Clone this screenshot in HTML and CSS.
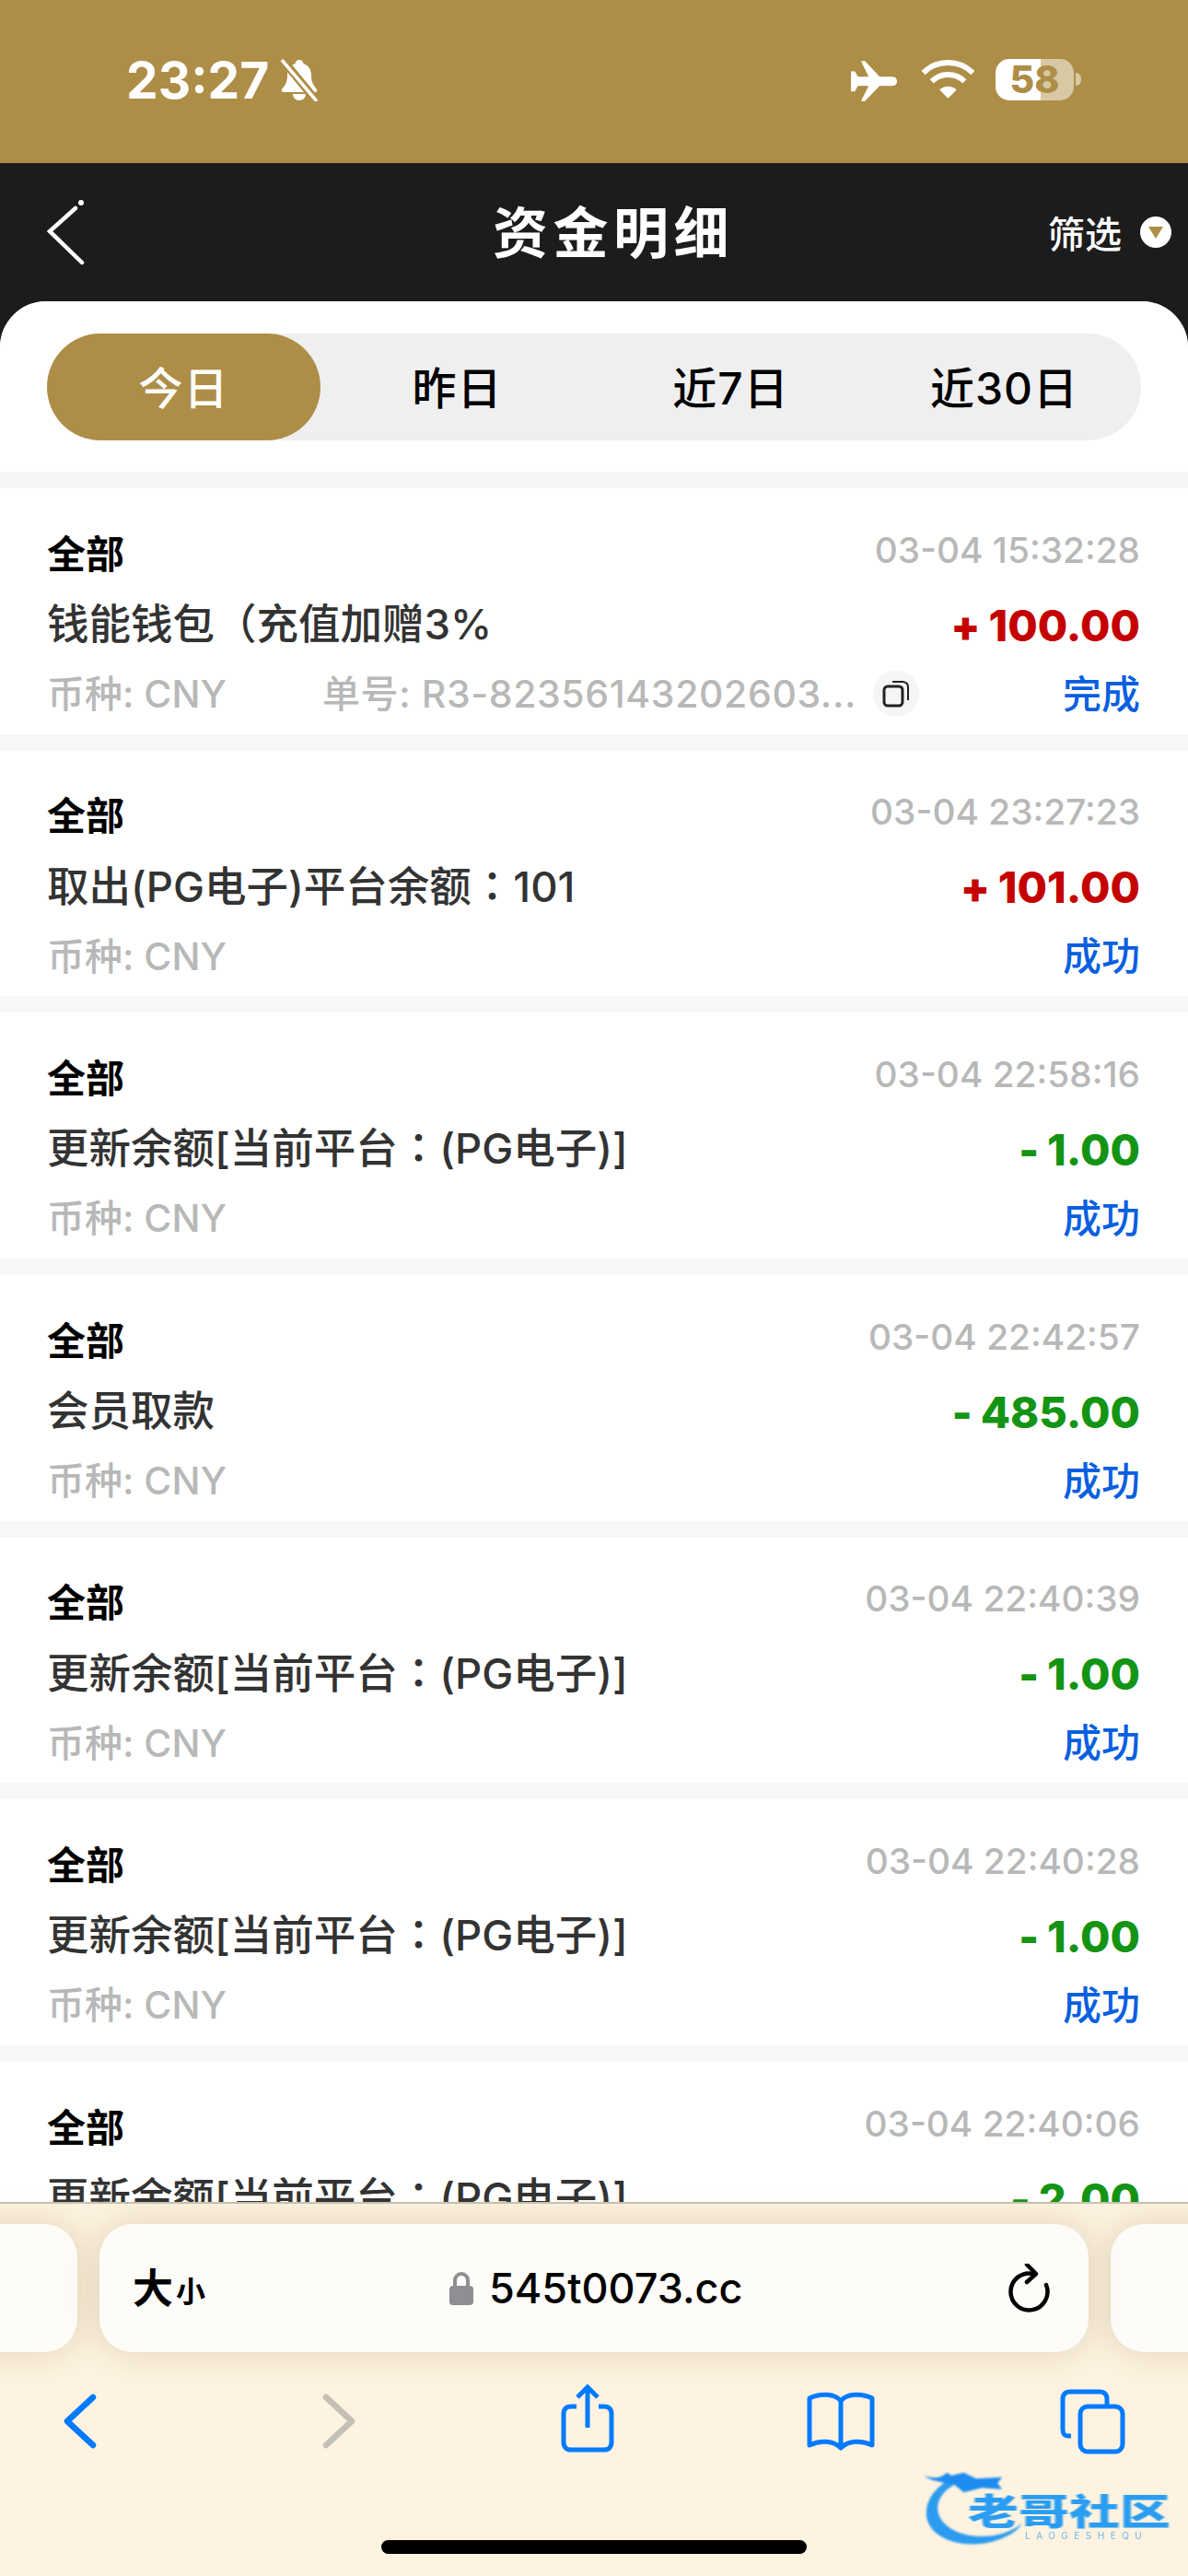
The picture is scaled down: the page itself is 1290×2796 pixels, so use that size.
FILE: index.html
```html
<!DOCTYPE html>
<html lang="zh-CN">
<head>
    <meta charset="UTF-8">
    <meta name="viewport" content="width=device-width, initial-scale=1.0">
    <title>资金明细</title>
    <link rel="stylesheet" href="styles.css">
</head>
<body>
    <div class="phone">
        <!-- Status bar -->
        <div class="status-bar">
            <div class="status-left">
                <span class="clock">23:27</span>
                <svg class="bell" viewBox="0 0 46 46">
                    <path d="M23 1c3 0 4 2 4.500 4 6 2 8.500 7 8.500 13 0 7 2 10 6 15 1 2 0 3-2 3H6c-2 0-3-1-2-3 4-5 6-8 6-15 0-6 2.500-11 8.500-13 .5-2 1.500-4 4.500-4z" fill="#fff"/>
                    <path d="M16 38h14c0 4-3 7-7 7s-7-3-7-7z" fill="#fff"/>
                    <path d="M4 0l38 46" stroke="#ae8d47" stroke-width="9"/>
                    <path d="M4 1l38 45" stroke="#fff" stroke-width="3.500"/>
                </svg>
            </div>
            <div class="status-right">
                <svg class="plane" viewBox="132 78 151 132">
                    <path d="M165 78H178L226 130H268Q283 132 283 145Q283 158 268 160H226L178 210H165L190 160H155L145 178H132V112H145L155 130H190Z" fill="#fff"/>
                </svg>
                <svg class="wifi" viewBox="362 75 172 128">
                    <path d="M366 118A116 116 0 0 1 530 118" fill="none" stroke="#fff" stroke-width="18"/>
                    <path d="M394 146A77 77 0 0 1 502 146" fill="none" stroke="#fff" stroke-width="18"/>
                    <path d="M448 202L420 174A40 40 0 0 1 476 174Z" fill="#fff"/>
                </svg>
                <div class="battery"><span>58</span></div>
                <div class="battery-nub"></div>
            </div>
        </div>

        <!-- Nav -->
        <div class="nav">
            <svg class="nav-back" viewBox="0 0 42 72">
                <path d="M31 10L3 35L38 69" fill="none" stroke="#fff" stroke-width="4.500" stroke-linecap="round"/>
                <circle cx="37" cy="4" r="3" fill="#fff"/>
            </svg>
            <div class="nav-title">资金明细</div>
            <div class="nav-filter">
                <span>筛选</span>
                <span class="filter-dot"><i></i></span>
            </div>
        </div>

        <div class="panel">
            <div class="tabs-wrap">
                <div class="tabs">
                    <div class="tab active">今日</div>
                    <div class="tab">昨日</div>
                    <div class="tab">近7日</div>
                    <div class="tab">近30日</div>
                </div>
            </div>

            <div class="list">
                <div class="card">
                    <div class="row">
                        <span class="type">全部</span>
                        <span class="time">03-04 15:32:28</span>
                    </div>
                    <div class="row">
                        <span class="name">钱能钱包（充值加赠3%</span>
                        <span class="amount plus"><small>+</small>100.00</span>
                    </div>
                    <div class="row">
                        <span class="coin">币种: CNY</span>
                        <span class="order">单号: R3-82356143202603...</span>
                        <span class="copy">
                            <svg viewBox="0 0 30 30">
                                <rect x="2" y="7" width="20" height="21" rx="4" fill="none" stroke="#222" stroke-width="3"/>
                                <path d="M11 2h11c3 0 6 2 6 5v15" fill="none" stroke="#222" stroke-width="2"/>
                            </svg>
                        </span>
                        <span class="state">完成</span>
                    </div>
                </div>

                <div class="card">
                    <div class="row">
                        <span class="type">全部</span>
                        <span class="time">03-04 23:27:23</span>
                    </div>
                    <div class="row">
                        <span class="name">取出(PG电子)平台余额<span class="tc" lang="zh-TW">：</span>101</span>
                        <span class="amount plus"><small>+</small>101.00</span>
                    </div>
                    <div class="row">
                        <span class="coin">币种: CNY</span>
                        <span class="state">成功</span>
                    </div>
                </div>

                <div class="card">
                    <div class="row">
                        <span class="type">全部</span>
                        <span class="time">03-04 22:58:16</span>
                    </div>
                    <div class="row">
                        <span class="name">更新余额[当前平台<span class="tc" lang="zh-TW">：</span>(PG电子)]</span>
                        <span class="amount minus"><small>-</small>1.00</span>
                    </div>
                    <div class="row">
                        <span class="coin">币种: CNY</span>
                        <span class="state">成功</span>
                    </div>
                </div>

                <div class="card">
                    <div class="row">
                        <span class="type">全部</span>
                        <span class="time">03-04 22:42:57</span>
                    </div>
                    <div class="row">
                        <span class="name">会员取款</span>
                        <span class="amount minus"><small>-</small>485.00</span>
                    </div>
                    <div class="row">
                        <span class="coin">币种: CNY</span>
                        <span class="state">成功</span>
                    </div>
                </div>

                <div class="card">
                    <div class="row">
                        <span class="type">全部</span>
                        <span class="time">03-04 22:40:39</span>
                    </div>
                    <div class="row">
                        <span class="name">更新余额[当前平台<span class="tc" lang="zh-TW">：</span>(PG电子)]</span>
                        <span class="amount minus"><small>-</small>1.00</span>
                    </div>
                    <div class="row">
                        <span class="coin">币种: CNY</span>
                        <span class="state">成功</span>
                    </div>
                </div>

                <div class="card">
                    <div class="row">
                        <span class="type">全部</span>
                        <span class="time">03-04 22:40:28</span>
                    </div>
                    <div class="row">
                        <span class="name">更新余额[当前平台<span class="tc" lang="zh-TW">：</span>(PG电子)]</span>
                        <span class="amount minus"><small>-</small>1.00</span>
                    </div>
                    <div class="row">
                        <span class="coin">币种: CNY</span>
                        <span class="state">成功</span>
                    </div>
                </div>

                <div class="card">
                    <div class="row">
                        <span class="type">全部</span>
                        <span class="time">03-04 22:40:06</span>
                    </div>
                    <div class="row">
                        <span class="name">更新余额[当前平台<span class="tc" lang="zh-TW">：</span>(PG电子)]</span>
                        <span class="amount minus"><small>-</small>2.00</span>
                    </div>
                    <div class="row">
                        <span class="coin">币种: CNY</span>
                        <span class="state">成功</span>
                    </div>
                </div>
            </div>
        </div>

        <!-- Safari bottom bar -->
        <div class="safari">
            <div class="pills">
                <div class="pill pill-side"></div>
                <div class="pill pill-main">
                    <span class="aa"><b>大</b><small>小</small></span>
                    <span class="address">
                        <svg class="lock" viewBox="0 0 26 36">
                            <path d="M6 16V9a7 7 0 0 1 14 0v7" fill="none" stroke="#8e8e93" stroke-width="4"/>
                            <rect x="0" y="15" width="26" height="21" rx="4" fill="#8e8e93"/>
                        </svg>
                        545t0073.cc
                    </span>
                    <svg class="reload" viewBox="0 0 46 54">
                        <path d="M27 11A20 20 0 1 0 41 23" fill="none" stroke="#000" stroke-width="4.500" stroke-linecap="round"/>
                        <path d="M20 1L30 11L20 20" fill="none" stroke="#000" stroke-width="4.500" stroke-linecap="round" stroke-linejoin="round"/>
                    </svg>
                </div>
                <div class="pill pill-side"></div>
            </div>

            <div class="toolbar">
                <svg class="tool" viewBox="0 0 100 80">
                    <path d="M64 14L36 40L64 66" fill="none" stroke="#007aff" stroke-width="6.500" stroke-linecap="round" stroke-linejoin="round"/>
                </svg>
                <svg class="tool" viewBox="0 0 100 80">
                    <path d="M36 14L64 40L36 66" fill="none" stroke="#c5c0b5" stroke-width="6.500" stroke-linecap="round" stroke-linejoin="round"/>
                </svg>
                <svg class="tool" viewBox="0 0 100 80">
                    <path d="M38 24h-6c-5 0-8 3-8 8v31c0 5 3 8 8 8h36c5 0 8-3 8-8V32c0-5-3-8-8-8h-6" fill="none" stroke="#007aff" stroke-width="5"/>
                    <path d="M50 47V3M39 14L50 3L61 14" fill="none" stroke="#007aff" stroke-width="5"/>
                </svg>
                <svg class="tool" viewBox="0 0 100 80">
                    <path d="M50 18C44 10 28 9 16 15v51c12-6 26-5 34 3 8-8 22-9 34-3V15C72 9 56 10 50 18zM50 18v51" fill="none" stroke="#007aff" stroke-width="5" stroke-linejoin="round"/>
                </svg>
                <svg class="tool" viewBox="0 0 100 80">
                    <path d="M27 56h-3c-5 0-6-3-6-8V16c0-5 3-8 8-8h32c5 0 8 3 8 8v8" fill="none" stroke="#007aff" stroke-width="5"/>
                    <rect x="37" y="24" width="46" height="49" rx="8" fill="none" stroke="#007aff" stroke-width="5"/>
                </svg>
            </div>

            <div class="watermark">
                <svg class="wm-dragon" viewBox="160 95 320 285">
                    <path d="M250 150C190 180 160 230 170 280C185 350 300 385 400 350C440 335 465 320 480 295C440 330 370 345 310 335C250 325 205 290 205 245C205 210 235 180 270 165Z" fill="#2b9bf0"/>
                    <path d="M160 140C190 150 215 150 235 130L250 140L290 130L330 150L415 145L400 165L415 185L350 180L290 195L260 170C220 160 185 160 160 140Z" fill="#1d8cf0"/>
                </svg>
                <span class="wm-name">老哥社区</span>
                <span class="wm-sub">LAOGESHEQU</span>
            </div>
            <div class="home-bar"></div>
        </div>
    </div>
</body>
</html>
```

FILE: styles.css
```css
* {
    box-sizing: border-box;
}

body {
    margin: 0;
    padding: 0;
    font-family: "Inter", "Noto Sans CJK SC", sans-serif;
}

.phone {
    width: 1290px;
    height: 2796px;
    display: flex;
    flex-direction: column;
    overflow: hidden;
    background-color: #1c1c1c;
}

/* Status bar */
.status-bar {
    height: 177px;
    flex-shrink: 0;
    background-color: #ae8d47;
    display: flex;
    justify-content: space-between;
    padding: 64px 116px 0 137px;
    color: #fff;
}

.status-left {
    display: flex;
    align-items: flex-start;
    gap: 10px;
}

.clock {
    font-size: 55px;
    font-weight: 700;
    line-height: 46px;
}

.bell {
    width: 46px;
    height: 46px;
}

.status-right {
    display: flex;
    align-items: flex-start;
}

.plane {
    width: 50px;
    height: 44px;
    margin-top: 2px;
    margin-right: 27px;
}

.wifi {
    width: 57px;
    height: 42px;
    margin-top: 1px;
    margin-right: 23px;
}

.battery {
    width: 85px;
    height: 45px;
    border-radius: 15px;
    background: linear-gradient(to right, #fff 0, #fff 49px, #d8c8a4 49px, #d8c8a4 100%);
    color: #ae8d47;
    font-size: 41px;
    font-weight: 800;
    line-height: 45px;
    text-align: center;
}

.battery-nub {
    width: 6px;
    height: 14px;
    margin: 15px 0 0 2px;
    background-color: #d8c8a4;
    border-radius: 0 6px 6px 0;
}

/* Nav */
.nav {
    height: 150px;
    flex-shrink: 0;
    display: flex;
    align-items: center;
    justify-content: space-between;
    padding: 0 18px 0 51px;
    position: relative;
    color: #fff;
}

.nav-back {
    width: 42px;
    height: 72px;
}

.nav-title {
    position: absolute;
    left: 0;
    right: 0;
    top: 36px;
    text-align: center;
    font-size: 60px;
    font-weight: 700;
    line-height: 80px;
    letter-spacing: 5.500px;
    padding-left: 42px;
}

.nav-filter {
    display: flex;
    align-items: center;
    gap: 20px;
    font-size: 40px;
    font-weight: 500;
}

.filter-dot {
    width: 34px;
    height: 34px;
    border-radius: 50%;
    background-color: #fff;
    display: flex;
    align-items: center;
    justify-content: center;
}

.filter-dot i {
    width: 0;
    height: 0;
    border-left: 8px solid transparent;
    border-right: 8px solid transparent;
    border-top: 13px solid #ae8d47;
}

/* Panel */
.panel {
    flex: 1;
    min-height: 0;
    background-color: #f7f7f7;
    border-radius: 50px 50px 0 0;
    overflow: hidden;
}

.tabs-wrap {
    background-color: #fff;
    padding: 35px 51px 34px;
}

.tabs {
    height: 116px;
    border-radius: 58px;
    background-color: #efefef;
    display: grid;
    grid-template-columns: repeat(4, 1fr);
}

.tab {
    display: flex;
    align-items: center;
    justify-content: center;
    border-radius: 58px;
    padding-bottom: 5px;
    font-size: 48px;
    font-weight: 500;
    letter-spacing: 1px;
    color: #000;
}

.tab.active {
    background-color: #ae8d47;
    color: #fff;
}

.list {
    display: flex;
    flex-direction: column;
    gap: 18px;
    padding-top: 18px;
}

.card {
    height: 266.7px;
    flex-shrink: 0;
    padding: 30px 52px 0 51px;
    background-color: #fff;
}

.row {
    height: 76px;
    display: flex;
    align-items: center;
    justify-content: space-between;
}

.type {
    font-size: 42px;
    font-weight: 700;
    color: #000;
}

.time {
    margin-bottom: 4px;
    font-size: 38.800px;
    font-weight: 500;
    color: #b8b8b8;
}

.name {
    font-size: 45.500px;
    font-weight: 500;
    color: #333;
}

/* the reference centers the full-width colon */
.tc {
    font-family: "Noto Sans CJK TC", sans-serif;
}

.amount {
    margin-top: 8px;
    font-size: 47px;
    font-weight: 800;
}

.amount small {
    font-size: 46px;
    font-weight: 900;
    margin-right: 9px;
}

.plus {
    color: #c40000;
}

.minus {
    color: #149414;
}

.coin {
    font-size: 41px;
    font-weight: 500;
    color: #b8b8b8;
    width: 299px;
}

.order {
    font-size: 41px;
    font-weight: 500;
    letter-spacing: 0.6px;
    color: #b8b8b8;
    white-space: nowrap;
}

.copy {
    width: 50px;
    height: 50px;
    border-radius: 50%;
    background-color: #f5f5f5;
    display: flex;
    align-items: center;
    justify-content: center;
    margin: 6px 0 0 18px;
}

.copy svg {
    width: 30px;
    height: 30px;
}

.state {
    font-size: 42px;
    font-weight: 500;
    color: #0a5fe0;
    margin-left: auto;
}

/* Safari bar */
.safari {
    height: 406px;
    flex-shrink: 0;
    position: relative;
    background-color: #fdf3e0;
    border-top: 2px solid #c9c2b0;
}

.pills {
    display: flex;
    gap: 24px;
    margin: 0 -50px;
    padding-top: 22px;
}

.pill {
    height: 139px;
    background-color: #fefcf8;
    border-radius: 36px;
    box-shadow: 0 0 36px rgba(150, 125, 80, 0.28);
}

.pill-side {
    width: 134px;
    flex-shrink: 0;
}

.pill-main {
    flex: 1;
    display: flex;
    align-items: center;
    justify-content: space-between;
    position: relative;
    padding: 0 41px 0 36px;
}

.aa {
    display: flex;
    align-items: flex-end;
    gap: 3px;
    line-height: 1;
    color: #000;
}

.aa b {
    font-size: 44px;
}

.aa small {
    font-size: 32px;
    font-weight: 700;
    margin-bottom: 2px;
}

.address {
    position: absolute;
    left: 380px;
    top: 0;
    height: 139px;
    display: flex;
    align-items: center;
    gap: 17px;
    font-size: 45px;
    font-weight: 500;
    color: #000;
}

.lock {
    width: 26px;
    height: 36px;
}

.reload {
    width: 46px;
    height: 54px;
}

.toolbar {
    display: grid;
    grid-template-columns: 281px 270px 275px 273px 100px;
    padding: 35px 0 0 37px;
}

.tool {
    width: 100px;
    height: 80px;
}

/* Watermark sits on top of the bar */
.watermark {
    position: absolute;
    left: 1003px;
    top: 280px;
    width: 270px;
    height: 96px;
}

.wm-dragon {
    position: absolute;
    left: 0;
    top: 0;
    width: 107px;
    height: 95px;
    filter: blur(0.8px);
}

.wm-name {
    position: absolute;
    left: 48px;
    top: 34px;
    font-size: 39px;
    line-height: 40px;
    font-weight: 900;
    color: #2a9df2;
    white-space: nowrap;
    transform: scaleX(1.41);
    transform-origin: left center;
    filter: blur(0.7px);
}

.wm-sub {
    position: absolute;
    left: 110px;
    top: 75px;
    font-size: 10px;
    line-height: 10px;
    letter-spacing: 6.500px;
    color: #6db5ea;
    filter: blur(0.4px);
}

.home-bar {
    position: absolute;
    left: 414px;
    top: 365px;
    width: 462px;
    height: 15px;
    border-radius: 8px;
    background-color: #000;
}
```
